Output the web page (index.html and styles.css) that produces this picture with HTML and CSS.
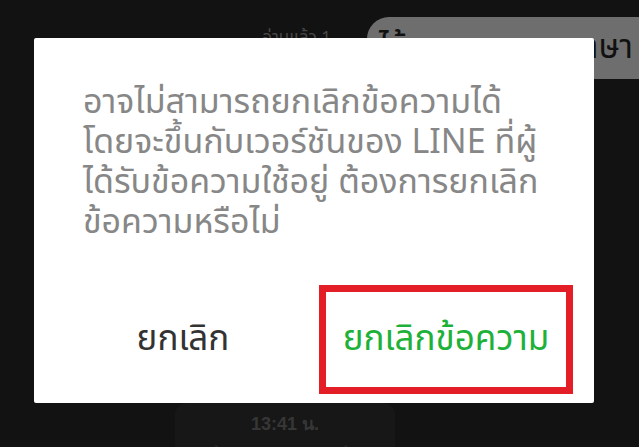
FILE: index.html
```html
<!DOCTYPE html>
<html lang="th">

<head>
    <meta charset="UTF-8">
    <meta name="viewport" content="width=device-width, initial-scale=1.0">
    <title>ยกเลิกข้อความ</title>
    <link rel="stylesheet" href="styles.css">
</head>

<body>
    <div class="chat">
        <div class="row-top">
            <span class="read">อ่านแล้ว 1</span>
            <div class="bubble">
                <span>ไข้</span>
                <span>ภาษา</span>
            </div>
        </div>
        <div class="row-bottom">
            <div class="stamp">
                <span class="time">13:41 น.</span>
                <span class="preview">ข้อความถูกยกเลิกแล้ว</span>
            </div>
        </div>
    </div>

    <div class="overlay">
        <div class="dialog">
            <p class="message">อาจไม่สามารถยกเลิกข้อความได้<br>โดยจะขึ้นกับเวอร์ชันของ LINE ที่ผู้<br>ได้รับข้อความใช้อยู่ ต้องการยกเลิก<br>ข้อความหรือไม่</p>
            <div class="actions">
                <button class="btn btn-cancel">ยกเลิก</button>
                <button class="btn btn-confirm">ยกเลิกข้อความ</button>
            </div>
        </div>
    </div>
</body>

</html>
```

FILE: styles.css
```css
body {
    margin: 0;
    width: 639px;
    height: 447px;
    overflow: hidden;
    background-color: #121212;
    font-family: "Noto Sans Thai", "Noto Sans", "DejaVu Sans", sans-serif;
    position: relative;
}

/* chat behind the dialog */
.chat {
    height: 447px;
    display: flex;
    flex-direction: column;
    justify-content: space-between;
}

.row-top {
    display: flex;
    align-items: flex-start;
    justify-content: flex-end;
    padding-top: 17px;
}

.read {
    color: #474747;
    font-size: 17px;
    margin: 8px 36px 0 0;
}

.bubble {
    width: 272px;
    height: 62px;
    background-color: #6e6e6e;
    border-radius: 22px 0 0 22px;
    display: flex;
    justify-content: space-between;
    align-items: center;
    padding: 0 6px 0 12px;
    box-sizing: border-box;
    font-size: 33px;
    color: #111;
}

.row-bottom {
    padding-left: 175px;
}

.stamp {
    width: 220px;
    height: 44px;
    background-color: #171717;
    border-radius: 12px 12px 0 0;
    display: flex;
    flex-direction: column;
    align-items: center;
    padding-top: 6px;
    box-sizing: border-box;
}

.time {
    color: #363636;
    font-family: "Liberation Sans", Arial, sans-serif;
    font-weight: bold;
    font-size: 18px;
}

.preview {
    color: #2a2a2a;
    font-weight: bold;
    font-size: 16px;
    margin-top: 4px;
}

/* dialog */
.overlay {
    position: absolute;
    left: 34px;
    top: 38px;
}

.dialog {
    width: 560px;
    height: 365px;
    background-color: #fff;
    border-radius: 2px;
    display: flex;
    flex-direction: column;
    justify-content: space-between;
    box-sizing: border-box;
}

.message {
    margin: 0;
    padding: 45px 20px 0 49px;
    font-size: 34px;
    line-height: 40px;
    color: #878787;
    white-space: nowrap;
}

.actions {
    display: flex;
    justify-content: flex-end;
    gap: 9px;
    padding: 0 21px 9px 0;
}

.btn {
    width: 254px;
    height: 109px;
    background: none;
    border: 7px solid transparent;
    box-sizing: border-box;
    font-family: inherit;
    font-size: 35px;
    padding: 0;
    cursor: pointer;
}

.btn-cancel {
    color: #333;
}

.btn-confirm {
    color: #1db13a;
    border-color: #e41e26;
}
```
